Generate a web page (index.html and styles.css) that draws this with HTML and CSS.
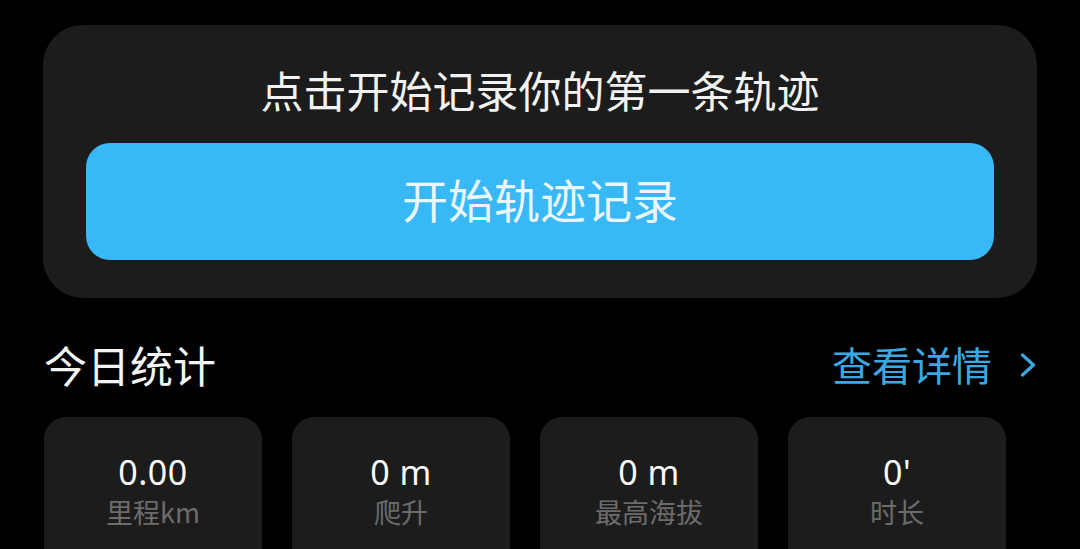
FILE: index.html
```html
<!DOCTYPE html>
<html lang="zh-CN">
<head>
<meta charset="utf-8">
<title>轨迹记录</title>
<link rel="stylesheet" href="styles.css">
</head>
<body>
<div class="page">
  <section class="hero">
    <div class="hero-title">点击开始记录你的第一条轨迹</div>
    <button class="start-btn">开始轨迹记录</button>
  </section>

  <div class="section-head">
    <div class="section-title">今日统计</div>
    <a class="more-link">查看详情
      <svg class="chevron" width="16" height="24" viewBox="0 0 16 24"><path d="M2.5 2 L13.5 12 L2.5 22" fill="none" stroke="currentColor" stroke-width="3.2" stroke-linecap="round" stroke-linejoin="round"/></svg>
    </a>
  </div>

  <div class="stats">
    <div class="stat">
      <div class="stat-value">0.00</div>
      <div class="stat-label">里程km</div>
    </div>
    <div class="stat">
      <div class="stat-value">0 m</div>
      <div class="stat-label">爬升</div>
    </div>
    <div class="stat">
      <div class="stat-value">0 m</div>
      <div class="stat-label">最高海拔</div>
    </div>
    <div class="stat">
      <div class="stat-value">0'</div>
      <div class="stat-label">时长</div>
    </div>
  </div>
</div>
</body>
</html>
```

FILE: styles.css
```css
html, body {
  margin: 0;
  padding: 0;
  background: #000;
  overflow: hidden;
}

body {
  width: 1080px;
  height: 549px;
  font-family: "Noto Sans CJK SC", "Noto Sans", sans-serif;
  color: #fff;
}

.page {
  padding: 25px 43px 0 43px;
}

.hero {
  box-sizing: border-box;
  width: 994px;
  height: 273px;
  background: #1c1c1c;
  border-radius: 40px;
  padding: 39px 43px 0 43px;
  display: flex;
  flex-direction: column;
  align-items: stretch;
}

.hero-title {
  font-size: 43px;
  line-height: 50px;
  height: 50px;
  text-align: center;
  color: #f2f2f2;
}

.start-btn {
  margin-top: 29px;
  height: 117px;
  border: none;
  border-radius: 24px;
  background: #38b9f6;
  color: #eaf7fe;
  font-family: "Noto Sans CJK SC", "Noto Sans", sans-serif;
  font-size: 46px;
  padding: 0 0 7px 0;
  cursor: pointer;
}

.section-head {
  margin-top: 41px;
  width: 993px;
  padding-left: 1px;
  box-sizing: border-box;
  display: flex;
  justify-content: space-between;
  align-items: center;
  height: 50px;
}

.section-title {
  font-size: 43px;
  line-height: 50px;
  color: #f4f4f4;
}

.more-link {
  display: flex;
  align-items: center;
  gap: 28px;
  font-size: 40px;
  line-height: 50px;
  color: #3aa8e2;
}

.chevron {
  display: block;
  margin-top: 2px;
}

.stats {
  margin-top: 28px;
  display: flex;
  gap: 30px;
  padding-left: 1px;
}

.stat {
  width: 218px;
  height: 132px;
  background: #1c1c1c;
  border-radius: 22px 22px 0 0;
  display: flex;
  flex-direction: column;
  align-items: center;
  padding-top: 35px;
  box-sizing: border-box;
}

.stat-value {
  font-family: "Noto Sans", "Noto Sans CJK SC", sans-serif;
  font-size: 34px;
  letter-spacing: 0.5px;
  line-height: 40px;
  color: #fafafa;
}

.stat-label {
  margin-top: 3px;
  font-size: 27px;
  line-height: 34px;
  color: #6c6c6c;
}
```
